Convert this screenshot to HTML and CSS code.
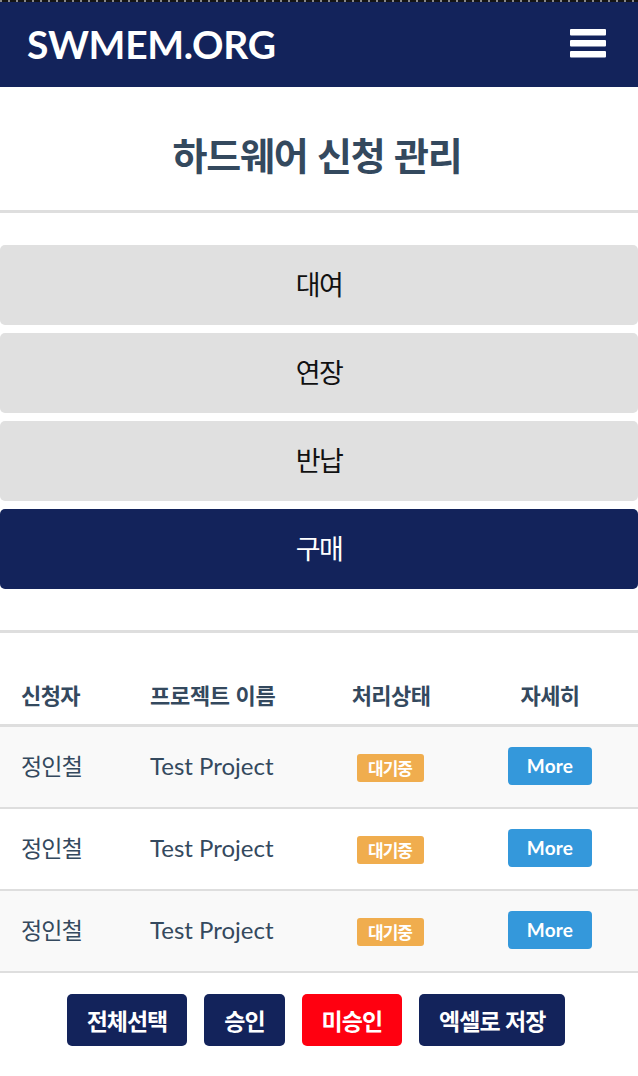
FILE: index.html
```html
<!DOCTYPE html>
<html lang="ko">
<head>
<meta charset="utf-8">
<title>SWMEM.ORG - 하드웨어 신청 관리</title>
<link rel="stylesheet" href="styles.css">
</head>
<body>
<header class="topbar">
  <div class="topline"></div>
  <div class="bar">
    <a class="logo" href="#">SWMEM.ORG</a>
    <button class="menu" aria-label="menu">
      <svg width="36" height="30" viewBox="0 0 36 30"><rect x="0" y="0" width="36" height="6.5" rx="1" fill="#fff"/><rect x="0" y="11" width="36" height="6.5" rx="1" fill="#fff"/><rect x="0" y="22" width="36" height="6.5" rx="1" fill="#fff"/></svg>
    </button>
  </div>
</header>

<section class="title-wrap">
  <h1 class="title">하드웨어 신청 관리</h1>
</section>

<nav class="tabs">
  <a class="tab" href="#">대여</a>
  <a class="tab" href="#">연장</a>
  <a class="tab" href="#">반납</a>
  <a class="tab active" href="#">구매</a>
</nav>

<div class="divider"></div>

<section class="table">
  <div class="row head">
    <div class="c1">신청자</div>
    <div class="c2">프로젝트 이름</div>
    <div class="c3">처리상태</div>
    <div class="c4">자세히</div>
  </div>
  <div class="row odd">
    <div class="c1">정인철</div>
    <div class="c2">Test Project</div>
    <div class="c3"><span class="badge">대기중</span></div>
    <div class="c4"><a class="more" href="#">More</a></div>
  </div>
  <div class="row">
    <div class="c1">정인철</div>
    <div class="c2">Test Project</div>
    <div class="c3"><span class="badge">대기중</span></div>
    <div class="c4"><a class="more" href="#">More</a></div>
  </div>
  <div class="row odd">
    <div class="c1">정인철</div>
    <div class="c2">Test Project</div>
    <div class="c3"><span class="badge">대기중</span></div>
    <div class="c4"><a class="more" href="#">More</a></div>
  </div>
</section>

<div class="actions">
  <button class="btn">전체선택</button>
  <button class="btn">승인</button>
  <button class="btn red">미승인</button>
  <button class="btn">엑셀로 저장</button>
</div>
</body>
</html>
```

FILE: styles.css
```css
* { box-sizing: border-box; }
html, body { margin: 0; padding: 0; background: #fff; }
body {
  font-family: Lato, "Noto Sans CJK KR", sans-serif;
  color: #34495e;
  width: 638px;
}
.topbar { background: #13235b; }
.topline {
  height: 2px;
  background: repeating-linear-gradient(90deg, #8a8a8a 0 2px, #151515 2px 8px);
}
.bar {
  height: 85px;
  display: flex;
  align-items: center;
  justify-content: space-between;
  padding: 0 32px 0 27px;
}
.logo {
  color: #fff;
  text-decoration: none;
  font-family: Lato, sans-serif;
  font-weight: 700;
  font-size: 39px;
  letter-spacing: -0.3px;
  margin-top: -2px;
}
.menu {
  background: none;
  border: 0;
  padding: 0;
  display: flex;
  margin-top: -1px;
}
.title-wrap {
  height: 126px;
  border-bottom: 3px solid #dedede;
  display: flex;
  align-items: center;
  justify-content: center;
}
.title {
  margin: 0;
  font-family: "Noto Sans CJK KR", sans-serif;
  font-weight: 700;
  font-size: 38px;
  letter-spacing: -1.2px;
  color: #34495e;
  margin-top: 10px;
  margin-left: -4px;
}
.tabs {
  margin-top: 32px;
  display: flex;
  flex-direction: column;
  gap: 8px;
}
.tab {
  height: 80px;
  background: #e0e0e0;
  border-radius: 5px;
  display: flex;
  align-items: center;
  justify-content: center;
  color: #111;
  text-decoration: none;
  font-family: "Noto Sans CJK KR", sans-serif;
  font-weight: 400;
  font-size: 27px;
  letter-spacing: -1.5px;
  padding-bottom: 4px;
}
.tab.active {
  background: #13235b;
  color: #fff;
}
.divider {
  margin-top: 41px;
  height: 3px;
  background: #dedede;
}
.table { margin-top: 36px; }
.row {
  display: grid;
  grid-template-columns: 150px 170px 142px 176px;
  align-items: center;
  height: 82px;
  border-bottom: 2px solid #dedede;
  font-size: 24px;
  padding-bottom: 4px;
}
.row.odd { background: #f9f9f9; }
.row.head {
  height: 58px;
  border-bottom: 3px solid #dedede;
  font-family: "Noto Sans CJK KR", sans-serif;
  font-weight: 700;
  font-size: 22px;
  letter-spacing: -0.6px;
  padding-bottom: 6px;
}
.c1 { padding-left: 21px; font-family: "Noto Sans CJK KR", sans-serif; font-size: 23px; letter-spacing: -0.8px; }
.head .c1 { font-size: 22px; letter-spacing: -0.6px; }
.c2 { letter-spacing: 0; }
.c3, .c4 { text-align: center; }
.head .c2 { letter-spacing: -0.3px; }
.badge {
  display: inline-block;
  background: #f0ad4e;
  color: #fff;
  font-family: "Noto Sans CJK KR", sans-serif;
  font-weight: 700;
  font-size: 17px;
  letter-spacing: -1px;
  line-height: 28px;
  height: 28px;
  width: 67px;
  border-radius: 3px;
  margin-top: 5px;
  margin-left: -2px;
}
.more {
  display: inline-block;
  background: #3498db;
  color: #fff;
  text-decoration: none;
  font-family: Lato, sans-serif;
  font-weight: 700;
  font-size: 19px;
  letter-spacing: 0.2px;
  line-height: 38px;
  width: 84px;
  height: 38px;
  border-radius: 4px;
  margin-left: 0;
  margin-top: 2px;
}
.actions {
  margin-top: 21px;
  display: flex;
  justify-content: center;
  gap: 17px;
  padding-right: 6px;
}
.btn {
  height: 52px;
  padding: 0 20px;
  border: 0;
  border-radius: 5px;
  background: #13235b;
  color: #fff;
  font-family: "Noto Sans CJK KR", sans-serif;
  font-weight: 700;
  font-size: 23px;
  letter-spacing: -1px;
}
.btn.red { background: #ff0010; }
```
